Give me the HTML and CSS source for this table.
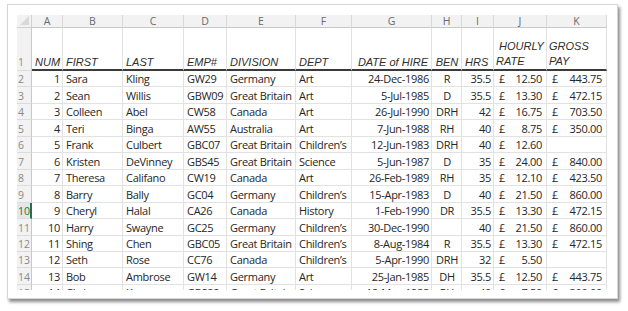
FILE: index.html
```html
<!DOCTYPE html>
<html>
<head>
<meta charset="utf-8">
<link rel="stylesheet" href="styles.css">
</head>
<body>
<div class="card">
  <div class="viewport">
    <div class="sheet">
      <div class="corner"><span class="tri"></span></div>
      <div class="ch">A</div><div class="ch">B</div><div class="ch">C</div><div class="ch">D</div><div class="ch">E</div><div class="ch">F</div><div class="ch">G</div><div class="ch">H</div><div class="ch">I</div><div class="ch">J</div><div class="ch">K</div>

      <div class="rh rh1">1</div>
      <div class="c hd">NUM</div><div class="c hd">FIRST</div><div class="c hd">LAST</div><div class="c hd">EMP#</div><div class="c hd">DIVISION</div><div class="c hd">DEPT</div><div class="c hd r">DATE of HIRE</div><div class="c hd ctr">BEN</div><div class="c hd">HRS</div><div class="c hd wrap"><span class="lines"><span class="ind">HOURLY</span><br>RATE</span></div><div class="c hd wrap"><span class="lines">GROSS<br>PAY</span></div>

      <div class="rh">2</div>
      <div class="c r">1</div><div class="c">Sara</div><div class="c">Kling</div><div class="c">GW29</div><div class="c">Germany</div><div class="c">Art</div><div class="c r">24-Dec-1986</div><div class="c ctr">R</div><div class="c r">35.5</div><div class="c acc"><span>£</span><span>12.50</span></div><div class="c acc"><span>£</span><span>443.75</span></div>

      <div class="rh">3</div>
      <div class="c r">2</div><div class="c">Sean</div><div class="c">Willis</div><div class="c">GBW09</div><div class="c">Great Britain</div><div class="c">Art</div><div class="c r">5-Jul-1985</div><div class="c ctr">D</div><div class="c r">35.5</div><div class="c acc"><span>£</span><span>13.30</span></div><div class="c acc"><span>£</span><span>472.15</span></div>

      <div class="rh">4</div>
      <div class="c r">3</div><div class="c">Colleen</div><div class="c">Abel</div><div class="c">CW58</div><div class="c">Canada</div><div class="c">Art</div><div class="c r">26-Jul-1990</div><div class="c ctr">DRH</div><div class="c r">42</div><div class="c acc"><span>£</span><span>16.75</span></div><div class="c acc"><span>£</span><span>703.50</span></div>

      <div class="rh">5</div>
      <div class="c r">4</div><div class="c">Teri</div><div class="c">Binga</div><div class="c">AW55</div><div class="c">Australia</div><div class="c">Art</div><div class="c r">7-Jun-1988</div><div class="c ctr">RH</div><div class="c r">40</div><div class="c acc"><span>£</span><span>8.75</span></div><div class="c acc"><span>£</span><span>350.00</span></div>

      <div class="rh">6</div>
      <div class="c r">5</div><div class="c">Frank</div><div class="c">Culbert</div><div class="c">GBC07</div><div class="c">Great Britain</div><div class="c">Children’s</div><div class="c r">12-Jun-1983</div><div class="c ctr">DRH</div><div class="c r">40</div><div class="c acc"><span>£</span><span>12.60</span></div><div class="c"></div>

      <div class="rh">7</div>
      <div class="c r">6</div><div class="c">Kristen</div><div class="c">DeVinney</div><div class="c">GBS45</div><div class="c">Great Britain</div><div class="c">Science</div><div class="c r">5-Jun-1987</div><div class="c ctr">D</div><div class="c r">35</div><div class="c acc"><span>£</span><span>24.00</span></div><div class="c acc"><span>£</span><span>840.00</span></div>

      <div class="rh">8</div>
      <div class="c r">7</div><div class="c">Theresa</div><div class="c">Califano</div><div class="c">CW19</div><div class="c">Canada</div><div class="c">Art</div><div class="c r">26-Feb-1989</div><div class="c ctr">RH</div><div class="c r">35</div><div class="c acc"><span>£</span><span>12.10</span></div><div class="c acc"><span>£</span><span>423.50</span></div>

      <div class="rh">9</div>
      <div class="c r">8</div><div class="c">Barry</div><div class="c">Bally</div><div class="c">GC04</div><div class="c">Germany</div><div class="c">Children’s</div><div class="c r">15-Apr-1983</div><div class="c ctr">D</div><div class="c r">40</div><div class="c acc"><span>£</span><span>21.50</span></div><div class="c acc"><span>£</span><span>860.00</span></div>

      <div class="rh sel">10</div>
      <div class="c r">9</div><div class="c">Cheryl</div><div class="c">Halal</div><div class="c">CA26</div><div class="c">Canada</div><div class="c">History</div><div class="c r">1-Feb-1990</div><div class="c ctr">DR</div><div class="c r">35.5</div><div class="c acc"><span>£</span><span>13.30</span></div><div class="c acc"><span>£</span><span>472.15</span></div>

      <div class="rh">11</div>
      <div class="c r">10</div><div class="c">Harry</div><div class="c">Swayne</div><div class="c">GC25</div><div class="c">Germany</div><div class="c">Children’s</div><div class="c r">30-Dec-1990</div><div class="c ctr"></div><div class="c r">40</div><div class="c acc"><span>£</span><span>21.50</span></div><div class="c acc"><span>£</span><span>860.00</span></div>

      <div class="rh">12</div>
      <div class="c r">11</div><div class="c">Shing</div><div class="c">Chen</div><div class="c">GBC05</div><div class="c">Great Britain</div><div class="c">Children’s</div><div class="c r">8-Aug-1984</div><div class="c ctr">R</div><div class="c r">35.5</div><div class="c acc"><span>£</span><span>13.30</span></div><div class="c acc"><span>£</span><span>472.15</span></div>

      <div class="rh">13</div>
      <div class="c r">12</div><div class="c">Seth</div><div class="c">Rose</div><div class="c">CC76</div><div class="c">Canada</div><div class="c">Children’s</div><div class="c r">5-Apr-1990</div><div class="c ctr">DRH</div><div class="c r">32</div><div class="c acc"><span>£</span><span>5.50</span></div><div class="c"></div>

      <div class="rh">14</div>
      <div class="c r">13</div><div class="c">Bob</div><div class="c">Ambrose</div><div class="c">GW14</div><div class="c">Germany</div><div class="c">Art</div><div class="c r">25-Jan-1985</div><div class="c ctr">DH</div><div class="c r">35.5</div><div class="c acc"><span>£</span><span>12.50</span></div><div class="c acc"><span>£</span><span>443.75</span></div>

      <div class="rh">15</div>
      <div class="c r">14</div><div class="c">Chris</div><div class="c">Keane</div><div class="c">GBS22</div><div class="c">Great Britain</div><div class="c">Science</div><div class="c r">12-May-1988</div><div class="c ctr">RH</div><div class="c r">40</div><div class="c acc"><span>£</span><span>7.50</span></div><div class="c acc"><span>£</span><span>300.00</span></div>
    </div>
  </div>
</div>
</body>
</html>
```

FILE: styles.css
```css
* { box-sizing: border-box; }
html, body { margin: 0; padding: 0; background: #ffffff; }
body { width: 628px; height: 311px; overflow: hidden; }

.card {
  margin: 4px 0 0 7px;
  width: 611px;
  height: 295px;
  background: #fff;
  border: 1px solid #d6d6d6;
  box-shadow: 2px 3px 3px rgba(0, 0, 0, 0.45);
  padding: 10px 0 0 9px;
}

.viewport {
  width: 592px;
  height: 275px;
  overflow: hidden;
}

.sheet {
  display: grid;
  grid-template-columns: 15px 31px 60px 61px 43px 69px 56px 80px 30px 32px 53px 60px;
  grid-template-rows: 13px 43px repeat(14, 16.46px);
  font-family: "Open Sans", "Lato", sans-serif;
  font-size: 11px;
  letter-spacing: -0.3px;
  color: #262626;
}

.corner {
  position: relative;
  background: #f2f2f2;
  border-right: 1px solid #d0d0d0;
  border-bottom: 1px solid #d0d0d0;
}
.tri {
  position: absolute;
  right: 2px;
  bottom: 2px;
  width: 0;
  height: 0;
  border-left: 9px solid transparent;
  border-bottom: 9px solid #d8d8d8;
}

.ch {
  background: #f2f2f2;
  border-right: 1px solid #d8d8d8;
  border-bottom: 1px solid #c8c8c8;
  color: #6a6a6a;
  font-size: 10.5px;
  letter-spacing: 0;
  display: flex;
  align-items: center;
  justify-content: center;
  line-height: 11px;
}

.rh {
  background: #f2f2f2;
  border-right: 1px solid #c8c8c8;
  border-bottom: 1px solid #dcdcdc;
  color: #8a8a8a;
  font-size: 10.5px;
  letter-spacing: 0;
  padding-left: 1px;
  display: flex;
  align-items: flex-end;
  padding-bottom: 0;
}
.rh1 { padding-bottom: 1px; }
.rh.sel {
  border-right: 2px solid #217346;
  color: #217346;
  background: #e6e6e6;
}

.c {
  border-right: 1px solid #e2e2e2;
  border-bottom: 1px solid #e2e2e2;
  padding: 0 2px 0 3px;
  white-space: nowrap;
  overflow: visible;
  display: flex;
  align-items: flex-end;
  line-height: 15px;
}
.c.r { justify-content: flex-end; }
.c.ctr { justify-content: center; }

.c.hd {
  font-family: "Liberation Sans", Arial, sans-serif;
  font-style: italic;
  font-weight: 400;
  font-size: 11px;
  letter-spacing: 0;
  border-bottom: 2px solid #3a3a3a;
  color: #2e2e2e;
  padding-bottom: 0;
  line-height: 14px;
}
.c.hd.r { padding-right: 3px; }
.c.hd.wrap { line-height: 15px; padding-left: 2px; }
.ind { padding-left: 3px; }

.c.acc { justify-content: space-between; padding-right: 4px; }
.c.acc span:first-child { padding-left: 2px; }
```
